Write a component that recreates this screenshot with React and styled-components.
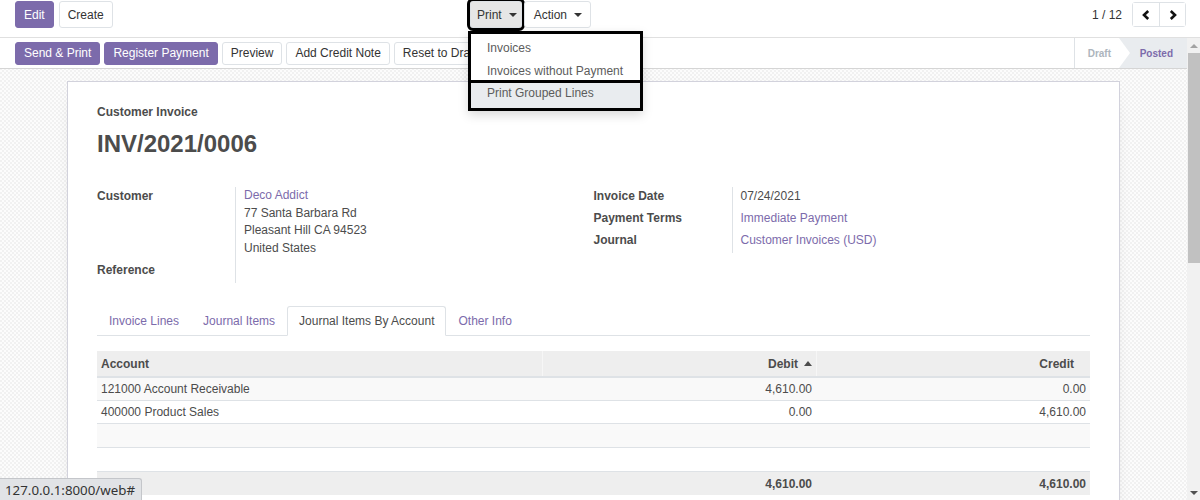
import React from "react";
import styled, { createGlobalStyle } from "styled-components";

const PURPLE = "#7c6bab";
const TEXT = "#4c4c4c";
const LINE = "#dee2e6";

const GlobalStyle = createGlobalStyle`
  html, body { margin: 0; padding: 0; }
  body {
    font-family: "Liberation Sans", Arial, sans-serif;
    font-size: 12px;
    color: ${TEXT};
    background: #fff;
  }
  * { box-sizing: border-box; }
`;

const Page = styled.div`
  width: 1200px;
  height: 500px;
  overflow: hidden;
  display: flex;
  flex-direction: column;
  position: relative;
`;

/* ---------- control panel ---------- */
const ControlPanel = styled.header`
  flex: none;
  display: grid;
  grid-template-columns: 455px 1fr auto;
  align-items: start;
  height: 38px;
  padding: 1px 14px 0 15px;
  border-bottom: 1px solid #e0e0e0;
  background: #fff;
`;

const ButtonRow = styled.div`
  display: flex;
  align-items: center;
  gap: ${(p) => p.$gap ?? 4}px;
`;

const Button = styled.button`
  font: inherit;
  font-size: 12px;
  height: ${(p) => p.$h ?? 27}px;
  padding: 0 8px;
  border-radius: 3px;
  border: 1px solid ${(p) => (p.$primary ? PURPLE : LINE)};
  background: ${(p) => (p.$primary ? PURPLE : p.$active ? "#e6e6e6" : "#fff")};
  color: ${(p) => (p.$primary ? "#fff" : "#333")};
  white-space: nowrap;
  line-height: 1;
  cursor: pointer;
  display: inline-flex;
  align-items: center;
`;

const ToggleButton = styled(Button)`
  padding: 0 ${(p) => p.$pr}px 0 ${(p) => p.$pl}px;
  outline: ${(p) => (p.$highlight ? "3px solid #000" : "none")};
  &::after {
    content: "";
    margin-left: 7px;
    border-top: 4px solid #333;
    border-left: 4px solid transparent;
    border-right: 4px solid transparent;
  }
`;

const MenuAnchor = styled.div`
  position: relative;
  display: flex;
  gap: 2px;
`;

const DropdownMenu = styled.div`
  position: absolute;
  top: 30px;
  left: -2px;
  width: 175px;
  z-index: 10;
  background: #fff;
  border: 3px solid #000;
  padding-top: 3px;
  box-shadow: 0 4px 10px rgba(0, 0, 0, 0.15);
`;

const MenuItem = styled.div`
  padding: ${(p) => (p.$focused ? "2px 16px 7px" : "3px 16px")};
  margin-top: ${(p) => (p.$focused ? -3 : 0)}px;
  line-height: ${(p) => (p.$focused ? 16 : 17)}px;
  color: #5c5c5c;
  white-space: nowrap;
  background: ${(p) => (p.$focused ? "#e9ecef" : "transparent")};
  border-top: ${(p) => (p.$focused ? "3px solid #000" : "none")};
`;

const Pager = styled.div`
  display: flex;
  align-items: center;
  height: 27px;
`;

const PagerValue = styled.span`
  color: #333;
  margin-right: 10px;
`;

const PagerGroup = styled.div`
  display: flex;
  height: 25px;
  border: 1px solid ${LINE};
  border-radius: 3px;
`;

const PagerButton = styled.button`
  width: 26px;
  height: 100%;
  border: none;
  border-left: ${(p) => (p.$first ? "none" : `1px solid ${LINE}`)};
  background: #fff;
  display: flex;
  align-items: center;
  justify-content: center;
  padding: 0;
  cursor: pointer;
`;

const Chevron = ({ dir }) => (
  <svg width="8" height="10" viewBox="0 0 8 10" aria-hidden="true">
    <polyline
      points={dir === "left" ? "6.2,1 2,5 6.2,9" : "1.8,1 6,5 1.8,9"}
      fill="none"
      stroke="#111"
      strokeWidth="2.6"
      strokeLinejoin="miter"
    />
  </svg>
);

/* ---------- body / form ---------- */
const Body = styled.div`
  flex: 1;
  min-height: 0;
  display: flex;
`;

const Content = styled.main`
  flex: 1;
  min-width: 0;
  overflow: hidden;
  background-color: #f8f8f8;
  background-image: repeating-conic-gradient(#f1f1f1 0% 25%, #fcfcfc 0% 50%);
  background-size: 4px 4px;
`;

const StatusRow = styled.div`
  height: 31px;
  display: flex;
  justify-content: space-between;
  align-items: stretch;
  padding-left: 15px;
  background: #fff;
  border-bottom: 1px solid #d5d5d5;
`;

const StatusBar = styled.div`
  display: flex;
  border-left: 1px solid ${LINE};
`;

const Stage = styled.div`
  position: relative;
  display: flex;
  align-items: center;
  font-size: 10px;
  font-weight: bold;
  padding: ${(p) => (p.$current ? "0 14px 0 21px" : "0 0 0 13px")};
  width: ${(p) => (p.$current ? "auto" : "44px")};
  color: ${(p) => (p.$current ? PURPLE : "#adb5bd")};
  background: ${(p) => (p.$current ? "#e9ecef" : "#fff")};
  z-index: ${(p) => (p.$current ? 0 : 1)};
  &::after {
    content: ${(p) => (p.$current ? "none" : '""')};
    position: absolute;
    top: 0;
    right: -11px;
    border-left: 11px solid #fff;
    border-top: 15px solid transparent;
    border-bottom: 15px solid transparent;
  }
`;

const SheetWrap = styled.div`
  padding-top: 12px;
`;

const Sheet = styled.section`
  width: 1053px;
  margin: 0 auto;
  min-height: 500px;
  background: #fff;
  border: 1px solid #d2d2dc;
  box-shadow: 0 5px 20px -15px rgba(0, 0, 0, 0.4);
  padding: 21px 29px;
`;

const DocType = styled.div`
  font-weight: bold;
  line-height: 18px;
`;

const DocTitle = styled.h1`
  margin: 8px 0 0;
  font-size: 24px;
  line-height: 30px;
  font-weight: bold;
  color: ${TEXT};
`;

const Groups = styled.div`
  display: grid;
  grid-template-columns: 1fr 1fr;
  margin-top: 28px;
  align-items: start;
`;

const Group = styled.div`
  display: grid;
  grid-template-columns: 139px 1fr;
`;

const Label = styled.div`
  font-weight: bold;
  line-height: 18px;
  padding-bottom: 4px;
  border-right: 1px solid ${LINE};
`;

const Value = styled.div`
  line-height: ${(p) => (p.$multi ? "17.5px" : "18px")};
  padding: 0 0 4px 8px;
`;

const Link = styled.span`
  color: ${PURPLE};
`;

const Tabs = styled.nav`
  display: flex;
  margin-top: 23px;
  border-bottom: 1px solid ${LINE};
`;

const Tab = styled.div`
  padding: 5px 11px;
  line-height: 18px;
  margin-bottom: -1px;
  border: 1px solid ${(p) => (p.$active ? LINE : "transparent")};
  border-bottom-color: ${(p) => (p.$active ? "#fff" : "transparent")};
  border-radius: 3px 3px 0 0;
  background: ${(p) => (p.$active ? "#fff" : "transparent")};
  color: ${(p) => (p.$active ? TEXT : PURPLE)};
`;

const Table = styled.div`
  margin-top: 15px;
`;

const Row = styled.div`
  display: grid;
  grid-template-columns: 445px 274px 1fr;
  height: ${(p) => (p.$head ? 27 : p.$empty ? 24 : 23)}px;
  background: ${(p) =>
    p.$head || p.$foot ? "#eee" : p.$striped ? "#f9f9f9" : "#fff"};
  border-bottom: ${(p) =>
    p.$head ? `2px solid ${LINE}` : p.$foot ? "none" : `1px solid ${LINE}`};
  font-weight: ${(p) => (p.$head || p.$foot ? "bold" : "normal")};
`;

const Cell = styled.div`
  display: flex;
  align-items: center;
  justify-content: ${(p) => (p.$num ? "flex-end" : "flex-start")};
  padding: 0 ${(p) => (p.$head && p.$num ? 16 : 4)}px 0 4px;
  border-left: ${(p) => (p.$head && p.$sep ? "1px solid #f6f6f6" : "none")};
  white-space: nowrap;
`;

const SortCaret = styled.span`
  margin-left: 6px;
  margin-right: -12px;
  border-bottom: 5px solid ${TEXT};
  border-left: 4px solid transparent;
  border-right: 4px solid transparent;
`;

/* ---------- scrollbar ---------- */
const ScrollBar = styled.aside`
  flex: none;
  width: 13px;
  background: #f1f1f1;
  display: flex;
  flex-direction: column;
  align-items: stretch;
`;

const ScrollArrow = styled.div`
  height: 15px;
  display: flex;
  align-items: center;
  justify-content: center;
  &::before {
    content: "";
    border-left: 4px solid transparent;
    border-right: 4px solid transparent;
    ${(p) =>
      p.$down
        ? "border-top: 4px solid #505050;"
        : "border-bottom: 4px solid #a3a3a3;"}
  }
`;

const ScrollThumb = styled.div`
  height: 210px;
  margin-left: 1px;
  background: #c1c1c1;
`;

const ScrollSpacer = styled.div`
  flex: 1;
`;

const UrlBubble = styled.div`
  position: absolute;
  left: 0;
  bottom: 0;
  height: 22px;
  padding: 0 6px 0 5px;
  display: flex;
  align-items: center;
  font-family: "Noto Sans", "DejaVu Sans", sans-serif;
  font-size: 13.3px;
  color: #333;
  background: #e1e3e6;
  border-top: 1px solid #c4c6ca;
  border-right: 1px solid #c4c6ca;
  border-top-right-radius: 3px;
`;

const lines = [
  { account: "121000 Account Receivable", debit: "4,610.00", credit: "0.00" },
  { account: "400000 Product Sales", debit: "0.00", credit: "4,610.00" },
  { account: "", debit: "", credit: "", empty: true },
  { account: "", debit: "", credit: "", empty: true },
];

export default function App() {
  return (
    <Page>
      <GlobalStyle />
      <ControlPanel>
        <ButtonRow $gap={5}>
          <Button $primary>Edit</Button>
          <Button>Create</Button>
        </ButtonRow>
        <MenuAnchor>
          <ToggleButton $active $highlight $pl={6} $pr={4}>
            Print
          </ToggleButton>
          <ToggleButton $pl={9} $pr={8}>
            Action
          </ToggleButton>
          <DropdownMenu>
            <MenuItem>Invoices</MenuItem>
            <MenuItem>Invoices without Payment</MenuItem>
            <MenuItem $focused>Print Grouped Lines</MenuItem>
          </DropdownMenu>
        </MenuAnchor>
        <Pager>
          <PagerValue>1 / 12</PagerValue>
          <PagerGroup>
            <PagerButton $first aria-label="Previous">
              <Chevron dir="left" />
            </PagerButton>
            <PagerButton aria-label="Next">
              <Chevron dir="right" />
            </PagerButton>
          </PagerGroup>
        </Pager>
      </ControlPanel>

      <Body>
        <Content>
          <StatusRow>
            <ButtonRow $gap={4}>
              <Button $primary $h={23}>Send &amp; Print</Button>
              <Button $primary $h={23}>Register Payment</Button>
              <Button $h={23}>Preview</Button>
              <Button $h={23}>Add Credit Note</Button>
              <Button $h={23}>Reset to Draft</Button>
            </ButtonRow>
            <StatusBar>
              <Stage>Draft</Stage>
              <Stage $current>Posted</Stage>
            </StatusBar>
          </StatusRow>

          <SheetWrap>
            <Sheet>
              <DocType>Customer Invoice</DocType>
              <DocTitle>INV/2021/0006</DocTitle>

              <Groups>
                <Group>
                  <Label>Customer</Label>
                  <Value $multi>
                    <Link>Deco Addict</Link>
                    <br />
                    77 Santa Barbara Rd
                    <br />
                    Pleasant Hill CA 94523
                    <br />
                    United States
                  </Value>
                  <Label>Reference</Label>
                  <Value />
                </Group>
                <Group>
                  <Label>Invoice Date</Label>
                  <Value>07/24/2021</Value>
                  <Label>Payment Terms</Label>
                  <Value>
                    <Link>Immediate Payment</Link>
                  </Value>
                  <Label>Journal</Label>
                  <Value>
                    <Link>Customer Invoices (USD)</Link>
                  </Value>
                </Group>
              </Groups>

              <Tabs>
                <Tab>Invoice Lines</Tab>
                <Tab>Journal Items</Tab>
                <Tab $active>Journal Items By Account</Tab>
                <Tab>Other Info</Tab>
              </Tabs>

              <Table>
                <Row $head>
                  <Cell $head>Account</Cell>
                  <Cell $head $num $sep>
                    Debit
                    <SortCaret />
                  </Cell>
                  <Cell $head $num $sep>
                    Credit
                  </Cell>
                </Row>
                {lines.map((l, i) => (
                  <Row key={i} $striped={i % 2 === 0} $empty={l.empty}>
                    <Cell>{l.account}</Cell>
                    <Cell $num>{l.debit}</Cell>
                    <Cell $num>{l.credit}</Cell>
                  </Row>
                ))}
                <Row $foot>
                  <Cell />
                  <Cell $num>4,610.00</Cell>
                  <Cell $num>4,610.00</Cell>
                </Row>
              </Table>
            </Sheet>
          </SheetWrap>
        </Content>
        <ScrollBar>
          <ScrollArrow />
          <ScrollThumb />
          <ScrollSpacer />
          <ScrollArrow $down />
        </ScrollBar>
      </Body>

      <UrlBubble>127.0.0.1:8000/web#</UrlBubble>
    </Page>
  );
}
